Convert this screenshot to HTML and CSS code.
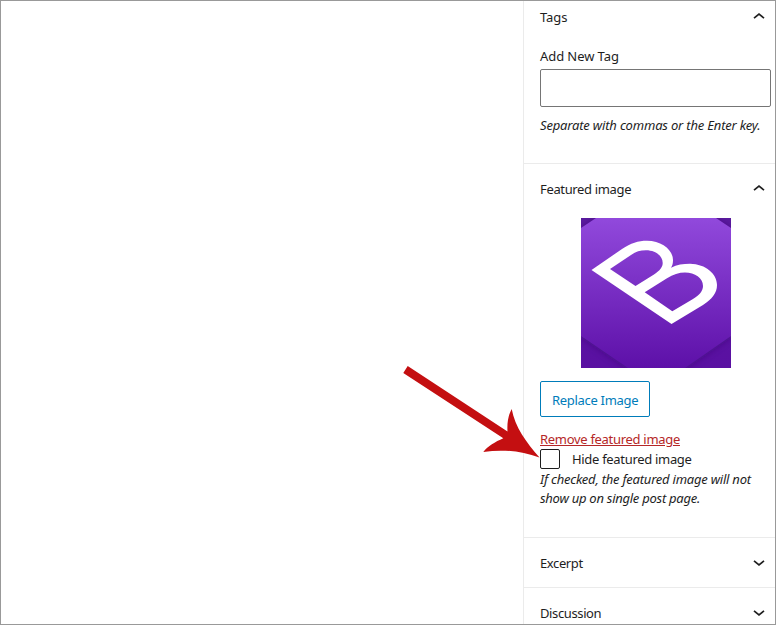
FILE: index.html
```html
<!DOCTYPE html>
<html lang="en">
<head>
<meta charset="utf-8">
<title>Post settings</title>
<link rel="stylesheet" href="styles.css">
</head>
<body>
<div class="editor">
  <main class="canvas"></main>
  <aside class="sidebar">
    <section class="panel panel-tags">
      <h2 class="panel-title"><span class="t-tags">Tags</span><svg class="chevron" viewBox="0 0 12 8"><path d="M1 6.2 6 2l5 4.2"/></svg></h2>
      <label class="field-label" for="tag"><span class="t-add">Add New Tag</span></label>
      <input class="field" id="tag" type="text">
      <p class="help"><span class="t-sep">Separate with commas or the Enter key.</span></p>
    </section>
    <section class="panel panel-image">
      <h2 class="panel-title"><span class="t-feat">Featured image</span><svg class="chevron" viewBox="0 0 12 8"><path d="M1 6.2 6 2l5 4.2"/></svg></h2>
      <svg class="thumb" viewBox="0 0 150 150">
        <defs>
          <linearGradient id="face" x1="0" y1="0" x2="0" y2="1"><stop offset="0" stop-color="#9149dc"/><stop offset="1" stop-color="#5d10a8"/></linearGradient>
          <linearGradient id="back" x1="0" y1="0" x2="0" y2="1"><stop offset="0" stop-color="#5a1b9e"/><stop offset="1" stop-color="#5a10a2"/></linearGradient>
          <filter id="soft" x="-10%" y="-10%" width="120%" height="120%"><feGaussianBlur stdDeviation="3"/></filter>
        </defs>
        <path fill="url(#back)" d="M0 0h150v150H0z"/>
        <path fill="#3f0a7c" opacity=".6" filter="url(#soft)" d="M0 10 15 0h120l15 10v110l-46 32H47L0 120z"/>
        <path fill="url(#face)" d="M0 10 15 0h120l15 10v108l-46 32H47L0 118z"/>
        <path fill="#fff" fill-rule="evenodd" d="M10.500 52 41 31C50 25 57 22.700 66 22.700C81 22.700 92 32 92 42C92 45 91.500 47.500 90 49.700C96 46.500 102 45.700 109 45.700C125 46 136 56 136 67C136 75 131 81 122 87L90.500 106ZM29 51 54.500 68 73 56.500C79 52.500 81.700 49 81.700 45C81.700 37.500 74 32.300 65 32.300C59 32.300 55 33.700 50 37ZM63.700 74.300 91.300 93.300 112 81C118.500 77 122 73 122 68C122 60 114 54.500 104 54.500C98 54.500 92 56.500 86 60.300Z"/>
      </svg>
      <button class="replace" type="button"><span class="t-rep">Replace Image</span></button>
      <a class="remove"><span class="t-rem">Remove featured image</span></a>
      <label class="check"><span class="box"></span><span class="t-hide">Hide featured image</span></label>
      <p class="note"><span class="t-if">If checked, the featured image will not</span><br><span class="t-show">show up on single post page.</span></p>
    </section>
    <section class="panel panel-closed">
      <h2 class="panel-title"><span class="t-exc">Excerpt</span><svg class="chevron" viewBox="0 0 12 8"><path d="M1 1.800 6 6l5-4.200"/></svg></h2>
    </section>
    <section class="panel panel-closed">
      <h2 class="panel-title"><span class="t-dis">Discussion</span><svg class="chevron" viewBox="0 0 12 8"><path d="M1 1.800 6 6l5-4.200"/></svg></h2>
    </section>
  </aside>
  <svg class="arrow" viewBox="400 360 145 100"><path d="M407.700 366 403.300 373 503.300 438.300C495 442 488 446 483.300 452C503 449 521 451 539.500 457.500C526 442 515 427 511.700 409C508 416 507 423 507.500 431.500Z"/></svg>
</div>
</body>
</html>
```
FILE: styles.css
```css
* { box-sizing: border-box; }
body {
  margin: 0;
  font: 13px/20px "Noto Sans", sans-serif;
  color: #1e1e1e;
}
h2, p { margin: 0; font-weight: 400; font-size: 13px; }
.editor {
  position: relative;
  display: flex;
  width: 776px;
  height: 625px;
  border: 1px solid #999;
  background: #fff;
  overflow: hidden;
}
.canvas { flex: 1; }
.sidebar {
  width: 252px;
  border-left: 1px solid #ebebeb;
  white-space: nowrap;
}
.panel {
  display: flex;
  flex-direction: column;
  align-items: flex-start;
  padding: 0 4px 0 16px;
}
.panel + .panel { border-top: 1px solid #ebebeb; }
.panel-tags { height: 162px; }
.panel-image { height: 374px; }
.panel-closed { height: 50px; }
.panel-title {
  display: flex;
  flex: none;
  align-items: center;
  justify-content: space-between;
  width: 100%;
  height: 50px;
  padding-right: 6px;
}
.panel-tags .panel-title { height: 32px; }
.chevron {
  width: 12px;
  height: 8px;
  margin-bottom: 3px;
  fill: none;
  stroke: #1e1e1e;
  stroke-width: 1.7;
}
.panel-tags .chevron { margin-bottom: 2px; }
.panel-closed .chevron { margin-bottom: 0; }
.field-label { height: 20px; margin-top: 13px; }
.field {
  width: 231px;
  height: 38px;
  margin-top: 3px;
  border: 1px solid #757575;
  border-radius: 2px;
  background: #fff;
}
.help { margin-top: 8px; font-style: italic; }
.thumb {
  flex: none;
  align-self: center;
  width: 150px;
  height: 150px;
  margin-top: 4px;
}
.replace {
  flex: none;
  width: 110px;
  height: 36px;
  margin-top: 13px;
  padding: 2px 0 0 11px;
  border: 1px solid #007cba;
  border-radius: 2px;
  background: #fff;
  color: #007cba;
  font: inherit;
  text-align: left;
}
.remove {
  height: 20px;
  margin-top: 12px;
  color: #b52727;
  text-decoration: underline;
}
.check { display: flex; gap: 12px; height: 20px; }
.box {
  width: 20px;
  height: 20px;
  border: 1px solid #1e1e1e;
  border-radius: 2px;
}
.note { font-style: italic; line-height: 19px; margin-top: 1px; }
.t-tags, .t-add { letter-spacing: -0.08px; }
.t-sep { letter-spacing: -0.18px; }
.t-feat { letter-spacing: -0.35px; }
.t-rep, .t-hide { letter-spacing: -0.31px; }
.t-rem { letter-spacing: -0.3px; }
.t-if { letter-spacing: -0.23px; }
.t-show { letter-spacing: -0.26px; }
.t-exc { letter-spacing: -0.4px; }
.t-dis { letter-spacing: -0.38px; }
.arrow {
  position: absolute;
  left: 399px;
  top: 359px;
  width: 145px;
  height: 100px;
  fill: #c40f11;
}
```
